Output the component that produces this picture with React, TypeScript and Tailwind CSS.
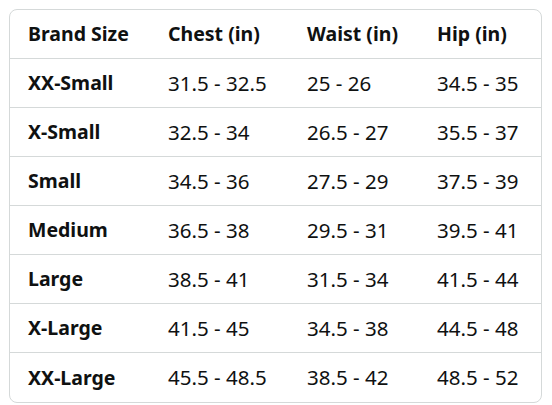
const headers = ['Brand Size', 'Chest (in)', 'Waist (in)', 'Hip (in)'];

const rows = [
  ['XX-Small', '31.5 - 32.5', '25 - 26', '34.5 - 35'],
  ['X-Small', '32.5 - 34', '26.5 - 27', '35.5 - 37'],
  ['Small', '34.5 - 36', '27.5 - 29', '37.5 - 39'],
  ['Medium', '36.5 - 38', '29.5 - 31', '39.5 - 41'],
  ['Large', '38.5 - 41', '31.5 - 34', '41.5 - 44'],
  ['X-Large', '41.5 - 45', '34.5 - 38', '44.5 - 48'],
  ['XX-Large', '45.5 - 48.5', '38.5 - 42', '48.5 - 52'],
];

export default function App() {
  return (
    <div className="w-[552px] h-[405px] bg-white pt-[9px] pl-[9px] font-['Noto_Sans',sans-serif] text-[#0f1111]">
      <div className="w-[533px] rounded-lg border border-[#d5d9d9] overflow-hidden">
        <div className="grid grid-cols-[140px_139px_130px_1fr] h-[49px] border-b border-[#d5d9d9] items-center text-[19.5px] font-bold">
          {headers.map((h) => (
            <div key={h} className="pl-[18px]">{h}</div>
          ))}
        </div>
        {rows.map((r, i) => (
          <div
            key={r[0]}
            className={`grid grid-cols-[140px_139px_130px_1fr] h-[49px] items-center text-[20.5px] ${
              i < rows.length - 1 ? 'border-b border-[#d5d9d9]' : ''
            }`}
          >
            {r.map((c, j) => (
              <div key={j} className={`pl-[18px] ${j === 0 ? 'font-bold text-[19.5px]' : ''}`}>{c}</div>
            ))}
          </div>
        ))}
      </div>
    </div>
  );
}
